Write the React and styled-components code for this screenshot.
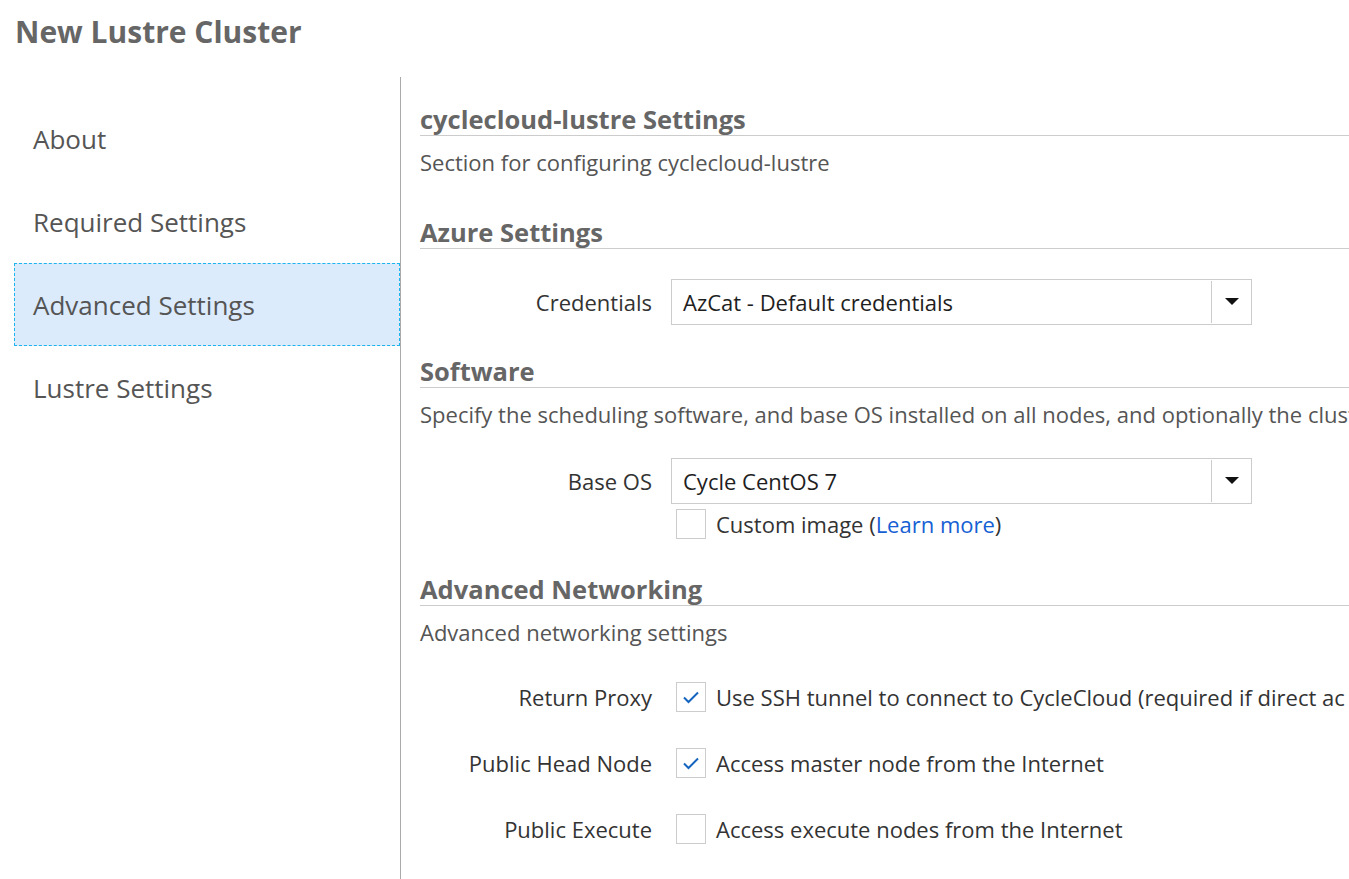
import styled, { createGlobalStyle } from 'styled-components';

const Global = createGlobalStyle`
  html, body {
    margin: 0;
    padding: 0;
    background: #fff;
    overflow: hidden;
  }
  body {
    font-family: "Open Sans", "Liberation Sans", sans-serif;
  }
`;

const Page = styled.div`
  display: flex;
  flex-direction: column;
  height: 100vh;
  width: 100vw;
  overflow: hidden;
`;

const PageTitle = styled.h1`
  margin: 0;
  height: 77px;
  padding: 12px 0 0 15px;
  box-sizing: border-box;
  font-size: 30px;
  line-height: 40px;
  font-weight: 700;
  color: #666;
`;

const Body = styled.div`
  display: flex;
  flex: 1;
  min-height: 0;
`;

const Sidebar = styled.nav`
  flex: 0 0 386px;
  margin-left: 14px;
  padding-top: 20px;
  border-right: 1px solid #aaa;
`;

const NavItem = styled.div`
  height: 83px;
  box-sizing: border-box;
  display: flex;
  align-items: center;
  padding-left: 18px;
  font-size: 26px;
  color: #555;
  border: 1px dashed ${({ $active }) => ($active ? '#1cb4ee' : 'transparent')};
  background: ${({ $active }) => ($active ? '#dbebfc' : 'transparent')};
`;

const Content = styled.main`
  flex: 0 0 1200px;
  padding: 27px 0 0 19px;
`;

const SectionTitle = styled.h2`
  margin: ${({ $top }) => $top ?? 0}px 0 0;
  font-size: 25.5px;
  line-height: 31px;
  font-weight: 700;
  color: #666;
  border-bottom: 1px solid #ccc;
`;

const Description = styled.p`
  margin: 12px 0 0;
  font-size: 22px;
  line-height: 28px;
  color: #555;
  white-space: nowrap;
`;

const Field = styled.div`
  display: flex;
  align-items: center;
  margin-top: ${({ $top }) => $top}px;
`;

const Label = styled.label`
  flex: 0 0 232px;
  text-align: right;
  margin-right: 19px;
  font-size: 22px;
  color: #333;
  white-space: nowrap;
`;

const Select = styled.div`
  display: flex;
  width: 581px;
  height: 46px;
  box-sizing: border-box;
  border: 1px solid #ccc;
  background: #fff;
`;

const SelectValue = styled.div`
  flex: 1;
  display: flex;
  align-items: center;
  padding-left: 11px;
  font-size: 22px;
  color: #1e1e1e;
`;

const SelectButton = styled.div`
  flex: 0 0 39px;
  border-left: 1px solid #ccc;
  display: flex;
  align-items: center;
  justify-content: center;
  margin: 1px 0;
`;

const Arrow = styled.span`
  width: 0;
  height: 0;
  border-left: 7px solid transparent;
  border-right: 7px solid transparent;
  border-top: 7px solid #111;
  margin-top: -2px;
`;

const CheckRow = styled.div`
  display: flex;
  align-items: center;
  margin-top: ${({ $top }) => $top ?? 0}px;
  padding-left: ${({ $indent }) => ($indent ? 251 : 0)}px;
`;

const Box = styled.span`
  flex: 0 0 30px;
  width: 30px;
  height: 30px;
  box-sizing: border-box;
  margin-left: 5px;
  border: 1px solid #ccc;
  display: flex;
  align-items: center;
  justify-content: center;
  background: #fff;
`;

const CheckText = styled.span`
  margin-left: 10px;
  font-size: 22px;
  color: #333;
  white-space: nowrap;
`;

const Link = styled.a`
  color: #1560d4;
  text-decoration: none;
`;

function Checkbox({ checked }) {
  return (
    <Box>
      {checked && (
        <svg width="18" height="14" viewBox="0 0 18 14">
          <path d="M2 7.5 L6.5 12 L16 2.5" fill="none" stroke="#1565c0" strokeWidth="2" />
        </svg>
      )}
    </Box>
  );
}

function Dropdown({ value }) {
  return (
    <Select>
      <SelectValue>{value}</SelectValue>
      <SelectButton>
        <Arrow />
      </SelectButton>
    </Select>
  );
}

const navItems = ['About', 'Required Settings', 'Advanced Settings', 'Lustre Settings'];

export default function App() {
  return (
    <Page>
      <Global />
      <PageTitle>New Lustre Cluster</PageTitle>
      <Body>
        <Sidebar>
          {navItems.map((item) => (
            <NavItem key={item} $active={item === 'Advanced Settings'}>
              {item}
            </NavItem>
          ))}
        </Sidebar>
        <Content>
          <SectionTitle>cyclecloud-lustre Settings</SectionTitle>
          <Description>Section for configuring cyclecloud-lustre</Description>

          <SectionTitle $top={41}>Azure Settings</SectionTitle>
          <Field $top={30}>
            <Label>Credentials</Label>
            <Dropdown value="AzCat - Default credentials" />
          </Field>

          <SectionTitle $top={31}>Software</SectionTitle>
          <Description>
            Specify the scheduling software, and base OS installed on all nodes, and optionally the clust
          </Description>
          <Field $top={30}>
            <Label>Base OS</Label>
            <Dropdown value="Cycle CentOS 7" />
          </Field>
          <CheckRow $indent $top={5}>
            <Checkbox />
            <CheckText>
              Custom image (<Link href="#">Learn more</Link>)
            </CheckText>
          </CheckRow>

          <SectionTitle $top={35}>Advanced Networking</SectionTitle>
          <Description>Advanced networking settings</Description>
          <Field $top={36}>
            <Label>Return Proxy</Label>
            <CheckRow>
              <Checkbox checked />
              <CheckText>Use SSH tunnel to connect to CycleCloud (required if direct ac</CheckText>
            </CheckRow>
          </Field>
          <Field $top={36}>
            <Label>Public Head Node</Label>
            <CheckRow>
              <Checkbox checked />
              <CheckText>Access master node from the Internet</CheckText>
            </CheckRow>
          </Field>
          <Field $top={36}>
            <Label>Public Execute</Label>
            <CheckRow>
              <Checkbox />
              <CheckText>Access execute nodes from the Internet</CheckText>
            </CheckRow>
          </Field>
        </Content>
      </Body>
    </Page>
  );
}
